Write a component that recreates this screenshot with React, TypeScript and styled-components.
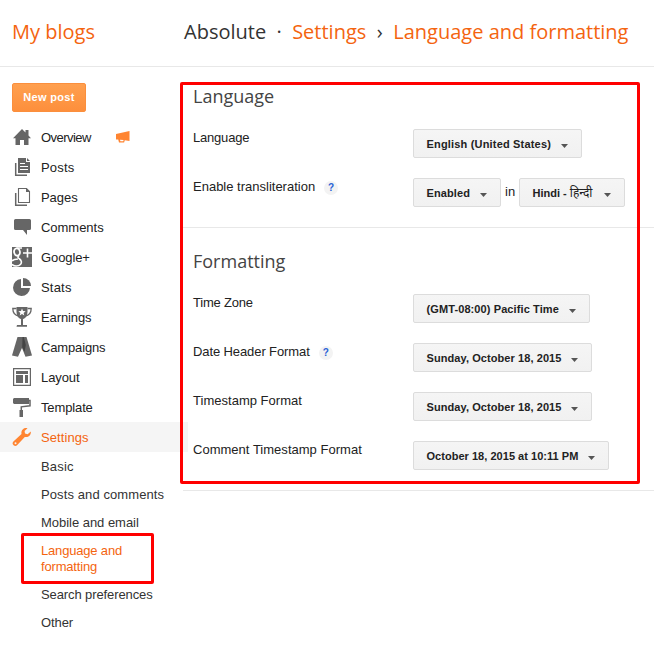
import React from 'react';
import styled, { createGlobalStyle } from 'styled-components';

const GlobalStyle = createGlobalStyle`
  * { box-sizing: border-box; }
  body {
    margin: 0;
    background: #fff;
    color: #222;
    font: 13px/16px "Liberation Sans", Arial, sans-serif;
    overflow: hidden;
  }
`;

const Page = styled.div`
  position: relative;
  width: 654px;
  height: 648px;
  overflow: hidden;
`;

const Header = styled.header`
  display: grid;
  grid-template-columns: 172px 1fr;
  height: 67px;
  padding: 18px 0 0 12px;
  border-bottom: 1px solid #e8e8e8;
  font: 20px/28px "Open Sans", sans-serif;
  color: #333;
  white-space: nowrap;
`;

const Accent = styled.a`
  color: #f4640f;
`;

const Crumbs = styled.nav`
  display: flex;
`;

const Separator = styled.span<{ $width: number }>`
  width: ${p => p.$width}px;
  text-align: center;
`;

const Body = styled.div`
  display: grid;
  grid-template-columns: 183px 1fr;
`;

const Sidebar = styled.aside`
  padding-top: 16px;
`;

const NewPost = styled.button`
  display: block;
  width: 74px;
  height: 29px;
  margin: 0 0 10px 12px;
  padding: 0;
  border: 1px solid #fb8f3d;
  border-radius: 2px;
  background: linear-gradient(#ffa04f, #fd8f3c);
  color: #fff;
  font: bold 11px/27px "Liberation Sans", Arial, sans-serif;
  letter-spacing: 0.35px;
`;

const Text = styled.span<{ $track?: number }>`
  letter-spacing: ${p => p.$track ?? 0}px;
  white-space: nowrap;
`;

const NavItem = styled.div<{ $active?: boolean }>`
  display: flex;
  align-items: center;
  width: 188px;
  height: 30px;
  padding-left: 12px;
  gap: 9px;
  line-height: 18px;
  color: ${p => (p.$active ? '#f4640f' : '#222')};
  background: ${p => (p.$active ? '#f5f5f5' : 'transparent')};

  > span:first-of-type { padding-top: 2px; }

  svg {
    flex: none;
    fill: ${p => (p.$active ? '#ff8532' : '#666')};
  }
`;

const Megaphone = styled.span`
  display: flex;
  margin-left: 15px;
  svg { fill: #ff8532; }
`;

const SubNav = styled.div`
  padding-top: 1px;
`;

const SubItem = styled.div<{ $active?: boolean }>`
  display: flex;
  flex-direction: column;
  padding: 6px 0 6px 41px;
  color: ${p => (p.$active ? '#f4640f' : '#333')};
`;

const Section = styled.section<{ $height: number; $top: number }>`
  height: ${p => p.$height}px;
  padding: ${p => p.$top}px 0 0 10px;
  border-bottom: 1px solid #e8e8e8;
`;

const Title = styled.h2`
  margin: 0 0 21px;
  font: 18px/24px "Open Sans", sans-serif;
  letter-spacing: 0;
  color: #444;
`;

const Setting = styled.div`
  display: grid;
  grid-template-columns: 220px 1fr;
  height: 29px;
  margin-bottom: 20px;
`;

const Label = styled.div`
  display: flex;
  align-items: center;
  height: 18px;
`;

const Help = styled.span`
  display: flex;
  align-items: center;
  justify-content: center;
  width: 14px;
  height: 14px;
  margin: 2px 0 0 9px;
  border-radius: 7px;
  background: #f3f3f3;
  color: #2a62d6;
  font: bold 10px/14px "Liberation Sans", Arial, sans-serif;
`;

const Controls = styled.div`
  display: flex;
`;

const Joiner = styled.span`
  width: 18px;
  padding-left: 4px;
  line-height: 27px;
`;

const Select = styled.button<{ $width: number }>`
  display: flex;
  align-items: center;
  justify-content: space-between;
  width: ${p => p.$width}px;
  height: 29px;
  padding: 0 13px 0 12.5px;
  border: 1px solid #dcdcdc;
  border-radius: 2px;
  background: linear-gradient(#f5f5f5, #f1f1f1);
  color: #222;
  font: bold 11px/25px "Liberation Sans", Arial, "Noto Sans Devanagari", sans-serif;

  span { padding-top: 2px; }
  svg { margin-top: 4px; fill: #555; }
`;

const Script = styled.i`
  font-style: normal;
  font-weight: 400;
  font-size: 12px;
`;

const Highlight = styled.div<{ $x: number; $y: number; $w: number; $h: number }>`
  position: absolute;
  left: ${p => p.$x}px;
  top: ${p => p.$y}px;
  width: ${p => p.$w}px;
  height: ${p => p.$h}px;
  border: 3px solid #f00;
  border-radius: 2px;
  pointer-events: none;
`;

const icons: Record<string, React.ReactNode> = {
  overview: <path d="M1 11.200 10 2l3.500 3.500V3h3v5.600l2.500 2.600h-2.500v6.800H12v-5H8v5H3.500v-6.800z" />,
  posts: (
    <>
      <path d="M3.700 6v12.300H15" fill="none" stroke="#666" strokeWidth="1.500" />
      <path d="M6 1h8v4h4v11H6z M15 1l3 3h-3z" />
      <path d="M8 6.500h5M8 9.500h8M8 12.500h8" stroke="#fff" strokeWidth="1" />
    </>
  ),
  pages: (
    <>
      <path d="M3.700 6v12.300H15" fill="none" stroke="#666" strokeWidth="1.500" />
      <path d="M6.500 1.500h8l3 3v11h-11z" fill="none" stroke="#666" strokeWidth="1.100" />
      <path d="M14 1l4 4h-4z" />
    </>
  ),
  comments: <path d="M3.500 2h14a1.500 1.500 0 0 1 1.500 1.500v8a1.500 1.500 0 0 1-1.500 1.500H15v5l-4-5H3.500A1.500 1.500 0 0 1 2 11.500v-8A1.500 1.500 0 0 1 3.500 2z" />,
  google: (
    <>
      <path d="M0 0h20v20H0z" />
      <g fill="none" stroke="#fff">
        <ellipse cx="5" cy="5" rx="2.900" ry="3.700" strokeWidth="1.800" transform="rotate(-12 5 5)" />
        <path d="M4.500 1h5.500M7 8.700c-2 1.300-.8 2.300.6 3.300 2 1.500 2.400 3.700.8 5.500-1.800 2-7 2-8.400-.2M6 12c-3 0-5 .8-6 2" strokeWidth="1.600" />
        <path d="M15.500 1.500v9M11 6h9" strokeWidth="1.600" />
      </g>
    </>
  ),
  stats: (
    <>
      <path d="M9 2v9h9a8.500 8.500 0 1 1-9-9z" />
      <path d="M11 1a8 8 0 0 1 8 8h-8z" />
    </>
  ),
  earnings: (
    <>
      <path d="M4.500 0h11v5c0 4-2 6.500-5.500 7.500C6.500 11.500 4.500 9 4.500 5z M9 12h2v6H9z M5 18h10v1.700H4.500z" />
      <path d="M4.500 1.500H.8C.8 6 3 8.500 7 9M15.500 1.500h3.700C19.200 6 17 8.500 13 9" fill="none" stroke="#666" strokeWidth="1.300" />
      <path d="m10 1.500 1 2.500 2.700.2-2.100 1.700.7 2.600-2.300-1.500-2.300 1.500.7-2.600-2.100-1.700L9 4z" fill="#fff" />
    </>
  ),
  campaigns: (
    <>
      <path d="M5.500 0h5.500l-.8 10.500L6 19.700 0 18.500z" />
      <path d="M9 0h5.500L20 18.500l-6.500 1.200L10 11z" />
      <path d="M10.500 0h1.300l2 8-1.300 7-2.300-5z" fill="#444" />
    </>
  ),
  layout: (
    <>
      <path d="M1.600 1.600h16.800v16.800H1.600z" fill="none" stroke="#666" strokeWidth="1.200" />
      <path d="M4 4h12v3H4z M4 8h7v8H4z M13 8h3v8h-3z" />
    </>
  ),
  template: (
    <>
      <path d="M2 1h15v6H2L1 6V2z M7.500 13h3.500v7.500H7.500z" />
      <path d="M16 3.500h2v5.300l-8.700 1V14" fill="none" stroke="#666" strokeWidth="1.500" />
    </>
  ),
  settings: (
    <path d="M15.500 1.200 12.600 4l.4 2.600 2.600.6L18.800 4.500c.5 3.900-2.700 6.400-6 5.400L5.300 18A2.400 2.400 0 0 1 1.400 14.500L9.500 7C8.700 3.200 12 .2 15.500 1.200zM3.500 15.200a1 1 0 1 0 .1 2 1 1 0 0 0-.1-2z" fillRule="evenodd" />
  ),
};

const Icon = ({ name }: { name: string }) => (
  <svg width="20" height="20" viewBox="0 0 20 20">{icons[name]}</svg>
);

const Caret = () => (
  <svg width="7" height="4" viewBox="0 0 7 4"><path d="M0 0h7L3.500 4z" /></svg>
);

const nav = [
  { icon: 'overview', text: 'Overview', track: -0.55 },
  { icon: 'posts', text: 'Posts', track: 0.2 },
  { icon: 'pages', text: 'Pages', track: -0.05 },
  { icon: 'comments', text: 'Comments', track: -0.03 },
  { icon: 'google', text: 'Google+', track: -0.1 },
  { icon: 'stats', text: 'Stats', track: 0.2 },
  { icon: 'earnings', text: 'Earnings', track: -0.1 },
  { icon: 'campaigns', text: 'Campaigns', track: -0.15 },
  { icon: 'layout', text: 'Layout', track: -0.1 },
  { icon: 'template', text: 'Template', track: -0.13 },
  { icon: 'settings', text: 'Settings', track: 0.08, active: true },
];

const subNav = [
  { lines: ['Basic'], track: 0.2 },
  { lines: ['Posts and comments'], track: 0.1 },
  { lines: ['Mobile and email'], track: -0.03 },
  { lines: ['Language and', 'formatting'], track: -0.18, active: true },
  { lines: ['Search preferences'], track: -0.1 },
  { lines: ['Other'], track: -0.1 },
];

type Choice = { text: React.ReactNode; width: number; track?: number };

const Dropdown = ({ text, width, track }: Choice) => (
  <Select $width={width}><Text $track={track}>{text}</Text><Caret /></Select>
);

type RowProps = { label: string; track?: number; help?: boolean; children: React.ReactNode };

const Row = ({ label, track, help, children }: RowProps) => (
  <Setting>
    <Label><Text $track={track}>{label}</Text>{help && <Help>?</Help>}</Label>
    <Controls>{children}</Controls>
  </Setting>
);

export default function App() {
  return (
    <Page>
      <GlobalStyle />
      <Header>
        <Accent>My blogs</Accent>
        <Crumbs>
          <Text>Absolute</Text>
          <Separator $width={26}>·</Separator>
          <Accent>Settings</Accent>
          <Separator $width={27}>›</Separator>
          <Accent>Language and formatting</Accent>
        </Crumbs>
      </Header>
      <Body>
        <Sidebar>
          <NewPost>New post</NewPost>
          {nav.map(item => (
            <NavItem key={item.text} $active={item.active}>
              <Icon name={item.icon} />
              <Text $track={item.track}>{item.text}</Text>
              {item.icon === 'overview' && (
                <Megaphone>
                  <svg width="16" height="12" viewBox="0 0 16 12">
                    <path d="M1 3 14.500 0v10l-4.700-.8-.7 2.300H4l-.8-3H1zM5 8.700l.4 1.500h2.800l.4-1.200z" fillRule="evenodd" />
                  </svg>
                </Megaphone>
              )}
            </NavItem>
          ))}
          <SubNav>
            {subNav.map(item => (
              <SubItem key={item.lines[0]} $active={item.active}>
                {item.lines.map(line => <Text key={line} $track={item.track}>{line}</Text>)}
              </SubItem>
            ))}
          </SubNav>
        </Sidebar>
        <main>
          <Section $height={161} $top={17}>
            <Title>Language</Title>
            <Row label="Language" track={-0.2}><Dropdown text="English (United States)" width={169} track={0.18} /></Row>
            <Row label="Enable transliteration" help>
              <Dropdown text="Enabled" width={88} track={0.1} />
              <Joiner>in</Joiner>
              <Dropdown text={<>Hindi - <Script>हिन्दी</Script></>} width={106} />
            </Row>
          </Section>
          <Section $height={263} $top={21}>
            <Title>Formatting</Title>
            <Row label="Time Zone" track={-0.2}><Dropdown text="(GMT-08:00) Pacific Time" width={177} track={0.1} /></Row>
            <Row label="Date Header Format" track={-0.1} help><Dropdown text="Sunday, October 18, 2015" width={179} track={0.08} /></Row>
            <Row label="Timestamp Format" track={0.02}><Dropdown text="Sunday, October 18, 2015" width={179} track={0.08} /></Row>
            <Row label="Comment Timestamp Format" track={0.02}><Dropdown text="October 18, 2015 at 10:11 PM" width={196} track={0.03} /></Row>
          </Section>
        </main>
      </Body>
      <Highlight $x={180} $y={82} $w={460} $h={402} />
      <Highlight $x={21} $y={533} $w={133} $h={51} />
    </Page>
  );
}
